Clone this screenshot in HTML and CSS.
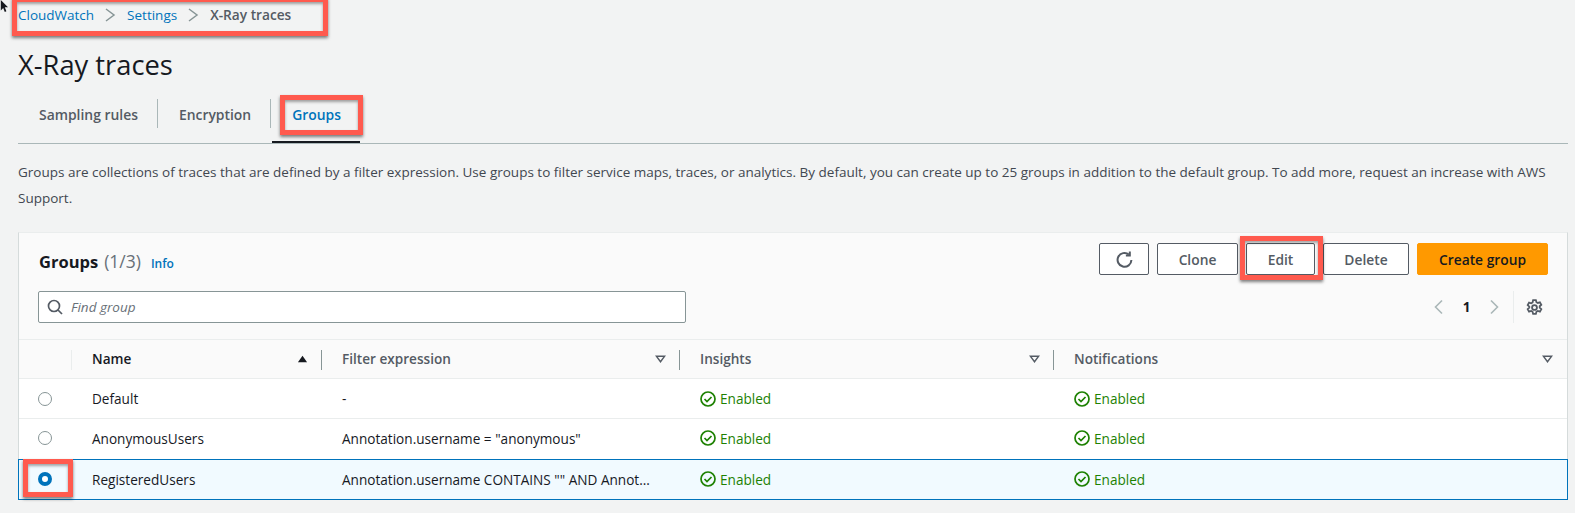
FILE: index.html
```html
<!DOCTYPE html>
<html lang="en">
<head>
<meta charset="utf-8">
<title>X-Ray traces</title>
<link rel="stylesheet" href="styles.css">
</head>
<body>
<nav class="crumbs">
  <a class="link">CloudWatch</a>
  <svg class="crumb-sep" viewBox="0 0 16 16"><path d="M4 2l8 6-8 6"/></svg>
  <a class="link">Settings</a>
  <svg class="crumb-sep" viewBox="0 0 16 16"><path d="M4 2l8 6-8 6"/></svg>
  <span class="crumb-current">X-Ray traces</span>
</nav>
<h1 class="title">X-Ray traces</h1>
<div class="tabs">
  <div class="tab">Sampling rules</div>
  <div class="tab">Encryption</div>
  <div class="tab tab-active">Groups</div>
</div>
<p class="desc">Groups are collections of traces that are defined by a filter expression. Use groups to filter service maps, traces, or analytics. By default, you can create up to 25 groups in addition to the default group. To add more, request an increase with AWS Support.</p>
<section class="card">
  <header class="card-head">
    <div class="card-title"><h2>Groups</h2><span class="count">(1/3)</span><a class="info">Info</a></div>
    <div class="actions">
      <button class="btn btn-icon"><svg class="icon" viewBox="0 0 16 16"><path d="M14.500 8.500a6.500 6.500 0 1 1-2.400-5.200"/><path d="M13 0.500v3.700H9.300"/></svg></button>
      <button class="btn btn-clone">Clone</button>
      <button class="btn btn-edit">Edit</button>
      <button class="btn btn-delete">Delete</button>
      <button class="btn btn-primary">Create group</button>
    </div>
  </header>
  <div class="tools">
    <div class="search">
      <svg class="icon search-icon" viewBox="0 0 16 16"><circle cx="7" cy="7" r="5.5"/><path d="M11 11l4 4"/></svg>
      <span>Find group</span>
    </div>
    <div class="pager">
      <svg class="pg-arrow" viewBox="0 0 16 16"><path d="M11 1.5L4.500 8l6.500 6.500"/></svg>
      <span class="pg-num">1</span>
      <svg class="pg-arrow" viewBox="0 0 16 16"><path d="M5 1.500L11.500 8 5 14.500"/></svg>
      <span class="pg-div"></span>
      <svg class="icon gear" viewBox="0 0 16 16"><circle cx="8" cy="8" r="2.300"/><path d="M6.700 1h2.600l.5 2 1.300.7 2-.6 1.300 2.300-1.500 1.400v1.400l1.500 1.400-1.300 2.300-2-.6-1.300.7-.5 2H6.700l-.5-2-1.300-.7-2 .6-1.300-2.300 1.500-1.400V7.100L1.600 5.700l1.300-2.300 2 .6 1.300-.7z"/></svg>
    </div>
  </div>
  <div class="table">
    <div class="row row-head">
      <div class="cell c-radio"><span class="soft-div"></span></div>
      <div class="cell c-name"><span class="th th-dark">Name</span><svg class="sort" viewBox="0 0 12 8"><path class="solid" d="M6 .5l5 7H1z"/></svg></div>
      <div class="cell c-filter"><span class="th">Filter expression</span><svg class="sort" viewBox="0 0 12 8"><path d="M1.500 1h9L6 7z"/></svg></div>
      <div class="cell c-insights"><span class="th">Insights</span><svg class="sort" viewBox="0 0 12 8"><path d="M1.500 1h9L6 7z"/></svg></div>
      <div class="cell c-notif"><span class="th">Notifications</span><svg class="sort" viewBox="0 0 12 8"><path d="M1.500 1h9L6 7z"/></svg></div>
    </div>
    <div class="row">
      <div class="cell c-radio"><span class="radio"></span></div>
      <div class="cell c-name">Default</div>
      <div class="cell c-filter">-</div>
      <div class="cell c-insights"><svg class="ok" viewBox="0 0 16 16"><circle cx="8" cy="8" r="7"/><path d="M4.500 8l2.500 2.500 4.500-4.500"/></svg>Enabled</div>
      <div class="cell c-notif"><svg class="ok" viewBox="0 0 16 16"><circle cx="8" cy="8" r="7"/><path d="M4.500 8l2.500 2.500 4.500-4.500"/></svg>Enabled</div>
    </div>
    <div class="row row-before-selected">
      <div class="cell c-radio"><span class="radio"></span></div>
      <div class="cell c-name">AnonymousUsers</div>
      <div class="cell c-filter">Annotation.username = "anonymous"</div>
      <div class="cell c-insights"><svg class="ok" viewBox="0 0 16 16"><circle cx="8" cy="8" r="7"/><path d="M4.500 8l2.500 2.500 4.500-4.500"/></svg>Enabled</div>
      <div class="cell c-notif"><svg class="ok" viewBox="0 0 16 16"><circle cx="8" cy="8" r="7"/><path d="M4.500 8l2.500 2.500 4.500-4.500"/></svg>Enabled</div>
    </div>
    <div class="row row-selected">
      <div class="cell c-radio"><span class="radio radio-on"></span></div>
      <div class="cell c-name">RegisteredUsers</div>
      <div class="cell c-filter">Annotation.username CONTAINS "" AND Annot…</div>
      <div class="cell c-insights"><svg class="ok" viewBox="0 0 16 16"><circle cx="8" cy="8" r="7"/><path d="M4.500 8l2.500 2.500 4.500-4.500"/></svg>Enabled</div>
      <div class="cell c-notif"><svg class="ok" viewBox="0 0 16 16"><circle cx="8" cy="8" r="7"/><path d="M4.500 8l2.500 2.500 4.500-4.500"/></svg>Enabled</div>
    </div>
  </div>
</section>
<div class="mark mark-crumbs"></div>
<div class="mark mark-tab"></div>
<div class="mark mark-edit"></div>
<div class="mark mark-radio"></div>
<svg class="cursor" viewBox="0 0 10 16"><path d="M1 0v13l3-3 2 5 2-1-2-5h4z"/></svg>
</body>
</html>
```
FILE: styles.css
```css
* { box-sizing: border-box; }
html, body { margin: 0; height: 513px; overflow: hidden; }
body {
  position: relative;
  background: #f2f3f3;
  color: #16191f;
  font-family: "Open Sans", "Noto Sans", sans-serif;
  font-size: 13.600px;
  padding: 0 7px 0 18px;
}
.link { color: #0073bb; font-size: 13.500px; }
.crumbs { display: flex; align-items: center; height: 29px; }
.crumb-sep { width: 16px; height: 16px; margin: 0 9px 0 8px; fill: none; stroke: #879596; stroke-width: 1.500; }
.crumb-current { color: #545b64; font-weight: 600; font-size: 13.700px; }
.title { margin: 17px 0 0; font-size: 27.300px; line-height: 38px; font-weight: 400; }
.tabs { display: flex; margin-top: 8px; height: 52px; border-bottom: 1px solid #aab7b8; }
.tab { position: relative; display: flex; align-items: center; padding: 0 20px 7px 21px; height: 51px; font-weight: 600; color: #545b64; font-size: 13.900px; }
.tab:not(.tab-active)::after { content: ""; position: absolute; right: 0; top: 7px; height: 29px; width: 1px; background: #aab7b8; }
.tab-active { color: #0073bb; margin-left: 1px; padding-left: 20px; padding-right: 19px; }
.tab-active::after { content: ""; position: absolute; left: 0; right: 0; bottom: 0; height: 2px; background: #16191f; }
.desc { margin: 15px 0 0; font-size: 13.500px; line-height: 26px; color: #414750; height: 52px; width: 1550px; }
.card { margin-top: 21px; height: 268px; background: #fafafa; border: 1px solid #d5dbdb; border-top-color: #eaeded; border-bottom: none; width: 1550px; }
.card-head { display: flex; justify-content: space-between; align-items: center; padding: 10px 19px 0 20px; height: 42px; }
.card-title { display: flex; align-items: baseline; font-size: 16.500px; padding-top: 4px; }
.card-title h2 { margin: 0; font-size: 16.500px; font-weight: 700; }
.count { margin-left: 6px; color: #687078; font-size: 17.500px; }
.info { margin-left: 10px; color: #0073bb; font-size: 12px; font-weight: 600; }
.actions { display: flex; gap: 8px; }
.btn { display: flex; align-items: center; justify-content: center; height: 32px; padding: 0; background: #fff; border: 1px solid #545b64; border-radius: 2px; color: #545b64; font: 600 13.800px "Open Sans", "Noto Sans", sans-serif; }
.btn-icon { width: 50px; }
.btn-clone { width: 81px; }
.btn-edit { width: 69px; }
.btn-delete { width: 86px; }
.btn-primary { width: 131px; background: #f90; border-color: #f90; color: #16191f; }
.icon { fill: none; stroke: #545b64; stroke-width: 1.700; }
.btn .icon { width: 17px; height: 17px; stroke-width: 1.900; }
.tools { display: flex; justify-content: space-between; align-items: center; padding: 16px 19px 0 19px; height: 48px; }
.search { display: flex; align-items: center; gap: 8px; width: 648px; height: 32px; padding-left: 8px; background: #fff; border: 1px solid #879596; border-radius: 2px; font-style: italic; color: #687078; font-size: 13.500px; }
.search-icon { width: 16px; height: 16px; }
.pager { display: flex; align-items: center; }
.pg-arrow { width: 16px; height: 16px; fill: none; stroke: #aab7b8; stroke-width: 1.600; }
.pg-num { width: 39px; text-align: center; font-weight: 700; font-size: 13.500px; }
.pg-div { width: 1px; height: 32px; margin: 0 12px 0 11px; background: #eaeded; }
.gear { width: 17px; height: 17px; margin-right: 5px; }
.table { border-top: 1px solid #eaeded; margin-top: 16px; }
.row { display: flex; height: 40px; background: #fff; border-top: 1px solid #eaeded; align-items: center; color: #16191f; }
.row-head { height: 38px; background: #fafafa; border-top: none; padding-bottom: 2px; }
.row-before-selected { height: 41px; padding-bottom: 2px; }
.row-selected { height: 41px; background: #f1faff; border: 1px solid #0073bb; margin: 0 -1px; padding-bottom: 1px; }
.cell { display: flex; align-items: center; height: 100%; min-width: 0; padding-left: 20px; position: relative; white-space: nowrap; }
.c-radio { width: 53px; padding: 0 0 0 19px; }
.c-name { width: 250px; }
.c-filter { width: 358px; }
.c-insights { width: 374px; }
.c-notif { flex: 1; }
.row-head .c-filter::after, .row-head .c-insights::after, .row-head .c-name::after { content: ""; position: absolute; right: 0; top: 10px; height: 20px; width: 1px; background: #879596; }
.soft-div { position: absolute; right: 0; top: 10px; height: 20px; width: 1px; background: #eaeded; }
.th { font-weight: 600; color: #545b64; }
.th-dark { color: #16191f; }
.sort { position: absolute; right: 14px; top: 15px; width: 11px; height: 8px; fill: none; stroke: #545b64; stroke-width: 1.500; }
.sort .solid { fill: #16191f; stroke: none; }
.radio { width: 14px; height: 14px; border: 1px solid #879596; border-radius: 50%; background: #fff; }
.radio-on { border: 4px solid #0073bb; }
.ok { width: 16px; height: 16px; margin-right: 4px; fill: none; stroke: #1d8102; stroke-width: 1.700; flex: none; }
.c-insights, .c-notif { color: #1d8102; }
.mark { position: absolute; border: 5px solid #ff5a4e; box-shadow: 0 2px 3px rgba(0,0,0,.5), inset 0 2px 3px rgba(0,0,0,.35); }
.mark-crumbs { left: 12px; top: -3px; width: 316px; height: 39px; }
.mark-tab { left: 280px; top: 95px; width: 83px; height: 40px; }
.mark-edit { left: 1240px; top: 236px; width: 83px; height: 44px; }
.mark-radio { left: 23px; top: 459px; width: 50px; height: 38px; }
.cursor { position: absolute; left: 0; top: 0; width: 8px; height: 13px; fill: #16191f; }
```
